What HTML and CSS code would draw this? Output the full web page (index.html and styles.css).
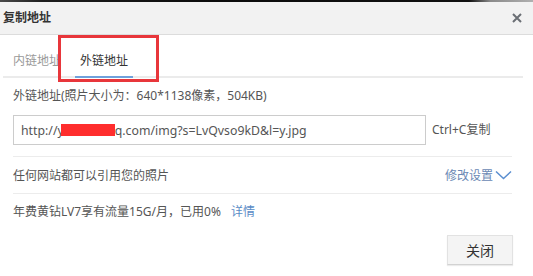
FILE: index.html
```html
<!DOCTYPE html>
<html lang="zh-CN">
<head>
<meta charset="utf-8">
<title>复制地址</title>
<link rel="stylesheet" href="styles.css">
</head>
<body>
<div class="photo-strip"></div>
<div class="dialog">
  <div class="titlebar">
    <span class="title">复制地址</span>
    <svg class="close-x" width="10" height="10" viewBox="0 0 10 10"><path d="M1 1L9 9M9 1L1 9" stroke="#6b6f75" stroke-width="2" fill="none"/></svg>
  </div>
  <div class="tabs">
    <span class="tab">内链地址</span>
    <span class="tab active">外链地址</span>
  </div>
  <div class="annot"></div>
  <div class="content">
    <div class="info">外链地址(照片大小为：640*1138像素，504KB)</div>
    <div class="url-row">
      <div class="url-box"><span>http://y</span><span class="redact"></span><span>q.com/img?s=LvQvso9kD&amp;l=y.jpg</span></div>
      <span class="hint">Ctrl+C复制</span>
    </div>
    <div class="row perm">
      <span>任何网站都可以引用您的照片</span>
      <span class="link settings">修改设置<svg class="chev" width="17" height="10" viewBox="0 0 17 10"><path d="M1 1.5L8.5 8.5L16 1.5" stroke="#5b8fd0" stroke-width="1.5" fill="none"/></svg></span>
    </div>
    <div class="row quota">年费黄钻LV7享有流量15G/月，已用0%<span class="link detail">详情</span></div>
    <div class="footer"><button class="btn">关闭</button></div>
  </div>
</div>
</body>
</html>
```
FILE: styles.css
```css
html, body {
  margin: 0;
  padding: 0;
  background: #ffffff;
  overflow: hidden;
}
body {
  width: 533px;
  height: 276px;
  font-family: "Noto Sans", "Noto Sans CJK SC", sans-serif;
  font-size: 12px;
  color: #555;
}
.photo-strip {
  height: 2px;
  background: linear-gradient(90deg, #4a4a4a 0%, #1d1d1d 8%, #0c0c0c 40%, #111 88%, #8a8a8a 92%, #b0b0b0 100%);
}
.dialog {
  position: relative;
}
.titlebar {
  height: 32px;
  background: #f2f2f2;
  border-bottom: 1px solid #dcdcdc;
  display: flex;
  align-items: center;
  justify-content: space-between;
  padding: 0 11px 0 3px;
}
.title {
  font-size: 12px;
  font-weight: bold;
  color: #333;
  line-height: 18px;
}
.close-x {
  display: block;
}
.tabs {
  display: flex;
  margin: 0 10px 0 3px;
  padding-left: 5px;
  gap: 9px;
  border-bottom: 2px solid #ebebeb;
}
.tab {
  padding: 17px 5px 6px;
  line-height: 18px;
  color: #999;
  border-bottom: 2px solid transparent;
  margin-bottom: -2px;
}
.tab.active {
  color: #333;
  border-bottom-color: #6fa1dc;
}
.annot {
  position: absolute;
  left: 58px;
  top: 33px;
  width: 95px;
  height: 41px;
  border: 3px solid #e8363b;
}
.content {
  padding: 0 21px 0 13px;
}
.info {
  margin-top: 9px;
  line-height: 18px;
}
.url-row {
  display: flex;
  align-items: center;
  margin-top: 10px;
  padding-bottom: 11px;
  border-bottom: 1px solid #ececec;
}
.url-box {
  width: 404px;
  height: 28px;
  border: 1px solid #cccccc;
  padding-left: 7px;
  display: flex;
  align-items: center;
  font-size: 12.3px;
  color: #555;
  white-space: nowrap;
}
.redact {
  display: inline-block;
  width: 54px;
  height: 12px;
  margin-left: -3px;
  background: #ff2d2d;
}
.hint {
  margin-left: 6px;
  line-height: 18px;
}
.row {
  display: flex;
  align-items: center;
}
.perm {
  height: 36px;
  justify-content: space-between;
  border-bottom: 1px solid #ececec;
}
.link {
  color: #5a8bc6;
}
.settings {
  display: flex;
  align-items: center;
  color: #6a88b4;
}
.chev {
  margin-left: 2px;
  display: block;
}
.quota {
  padding-top: 9px;
  line-height: 18px;
}
.detail {
  margin-left: 10px;
}
.footer {
  display: flex;
  justify-content: flex-end;
  margin-top: 14px;
  margin-right: -1px;
}
.btn {
  width: 66px;
  height: 30px;
  background: #f4f4f4;
  border: 1px solid #e2e2e2;
  border-bottom-color: #d2d2d2;
  box-shadow: 0 1px 1px rgba(0,0,0,0.08);
  font-family: "Noto Sans CJK SC", sans-serif;
  font-size: 14px;
  color: #333;
  padding: 0;
}
```
